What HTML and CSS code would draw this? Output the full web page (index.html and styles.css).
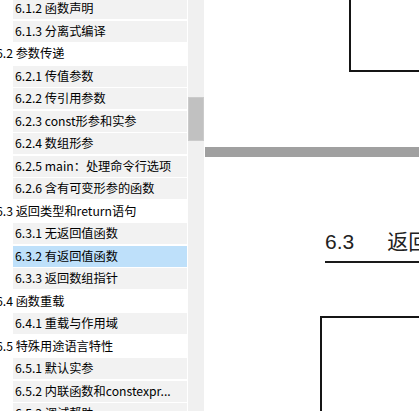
FILE: index.html
```html
<!DOCTYPE html>
<html lang="zh-CN">
<head>
<meta charset="utf-8">
<title>目录</title>
<link rel="stylesheet" href="styles.css">
</head>
<body>
<div class="app">
  <nav class="toc">
    <ul class="toc-list">
      <li class="item sub">6.1.2 函数声明</li>
      <li class="item sub">6.1.3 分离式编译</li>
      <li class="item top">6.2 参数传递</li>
      <li class="item sub">6.2.1 传值参数</li>
      <li class="item sub">6.2.2 传引用参数</li>
      <li class="item sub">6.2.3 const形参和实参</li>
      <li class="item sub">6.2.4 数组形参</li>
      <li class="item sub">6.2.5 main：处理命令行选项</li>
      <li class="item sub">6.2.6 含有可变形参的函数</li>
      <li class="item top">6.3 返回类型和return语句</li>
      <li class="item sub">6.3.1 无返回值函数</li>
      <li class="item sub active">6.3.2 有返回值函数</li>
      <li class="item sub">6.3.3 返回数组指针</li>
      <li class="item top">6.4 函数重载</li>
      <li class="item sub">6.4.1 重载与作用域</li>
      <li class="item top">6.5 特殊用途语言特性</li>
      <li class="item sub">6.5.1 默认实参</li>
      <li class="item sub">6.5.2 内联函数和constexpr...</li>
      <li class="item sub">6.5.3 调试帮助</li>
    </ul>
  </nav>
  <div class="scrollbar"><div class="thumb"></div></div>
  <main class="doc">
    <section class="page page-prev">
      <div class="figure-end"></div>
    </section>
    <div class="page-gap"></div>
    <section class="page page-next">
      <h2 class="heading"><span class="num">6.3</span><span class="title">返回类型和return语句</span></h2>
      <div class="figure-start"></div>
    </section>
  </main>
</div>
</body>
</html>
```
FILE: styles.css
```css
html, body {
  margin: 0;
  padding: 0;
  background: #ffffff;
}
body {
  width: 419px;
  height: 411px;
  overflow: hidden;
  font-family: "Noto Sans CJK SC", "Noto Sans", sans-serif;
}
.app {
  display: flex;
  width: 419px;
  height: 411px;
}
.toc {
  width: 187px;
  flex: none;
  overflow: hidden;
  background: #ffffff;
}
.toc-list {
  list-style: none;
  margin: -2px 0 0 -4px;
  padding: 0;
  display: flex;
  flex-direction: column;
  gap: 1.5px;
}
.item {
  height: 21px;
  line-height: 21px;
  font-size: 12.2px;
  color: #000000;
  white-space: nowrap;
}
.item.top {
  padding-left: 0;
  background: #ffffff;
}
.item.sub {
  margin-left: 17px;
  padding-left: 2px;
  background: #f2f2f2;
}
.item.active {
  background: #bee0fa;
}
.scrollbar {
  width: 16px;
  flex: none;
  margin-left: 1px;
  background: #f0f0f0;
  display: flex;
  flex-direction: column;
}
.thumb {
  margin-top: 97px;
  height: 42px;
  width: 14px;
  background: #c1c1c1;
  border: 1px solid #cbcbcb;
}
.doc {
  flex: 1;
  display: flex;
  flex-direction: column;
  background: #ffffff;
  overflow: hidden;
  padding-left: 1px;
}
.page {
  background: #ffffff;
}
.page-prev {
  height: 147px;
  flex: none;
}
.figure-end {
  margin-left: 144px;
  height: 70px;
  border-left: 2px solid #151515;
  border-bottom: 2px solid #151515;
}
.page-gap {
  height: 10px;
  flex: none;
  background: #a0a0a0;
}
.page-next {
  flex: 1;
  padding-left: 120px;
  padding-top: 70px;
}
.heading {
  margin: 0;
  font-family: "Liberation Sans", "Noto Sans CJK SC", sans-serif;
  font-weight: normal;
  font-size: 21px;
  line-height: 26px;
  color: #222222;
  white-space: nowrap;
  padding-bottom: 6px;
  border-bottom: 2px solid #1a1a1a;
}
.heading .title {
  margin-left: 33px;
  font-family: "Noto Sans CJK SC", sans-serif;
}
.figure-start {
  margin-top: 53px;
  margin-left: -5px;
  height: 200px;
  border-left: 2px solid #151515;
  border-top: 2px solid #151515;
}
```
